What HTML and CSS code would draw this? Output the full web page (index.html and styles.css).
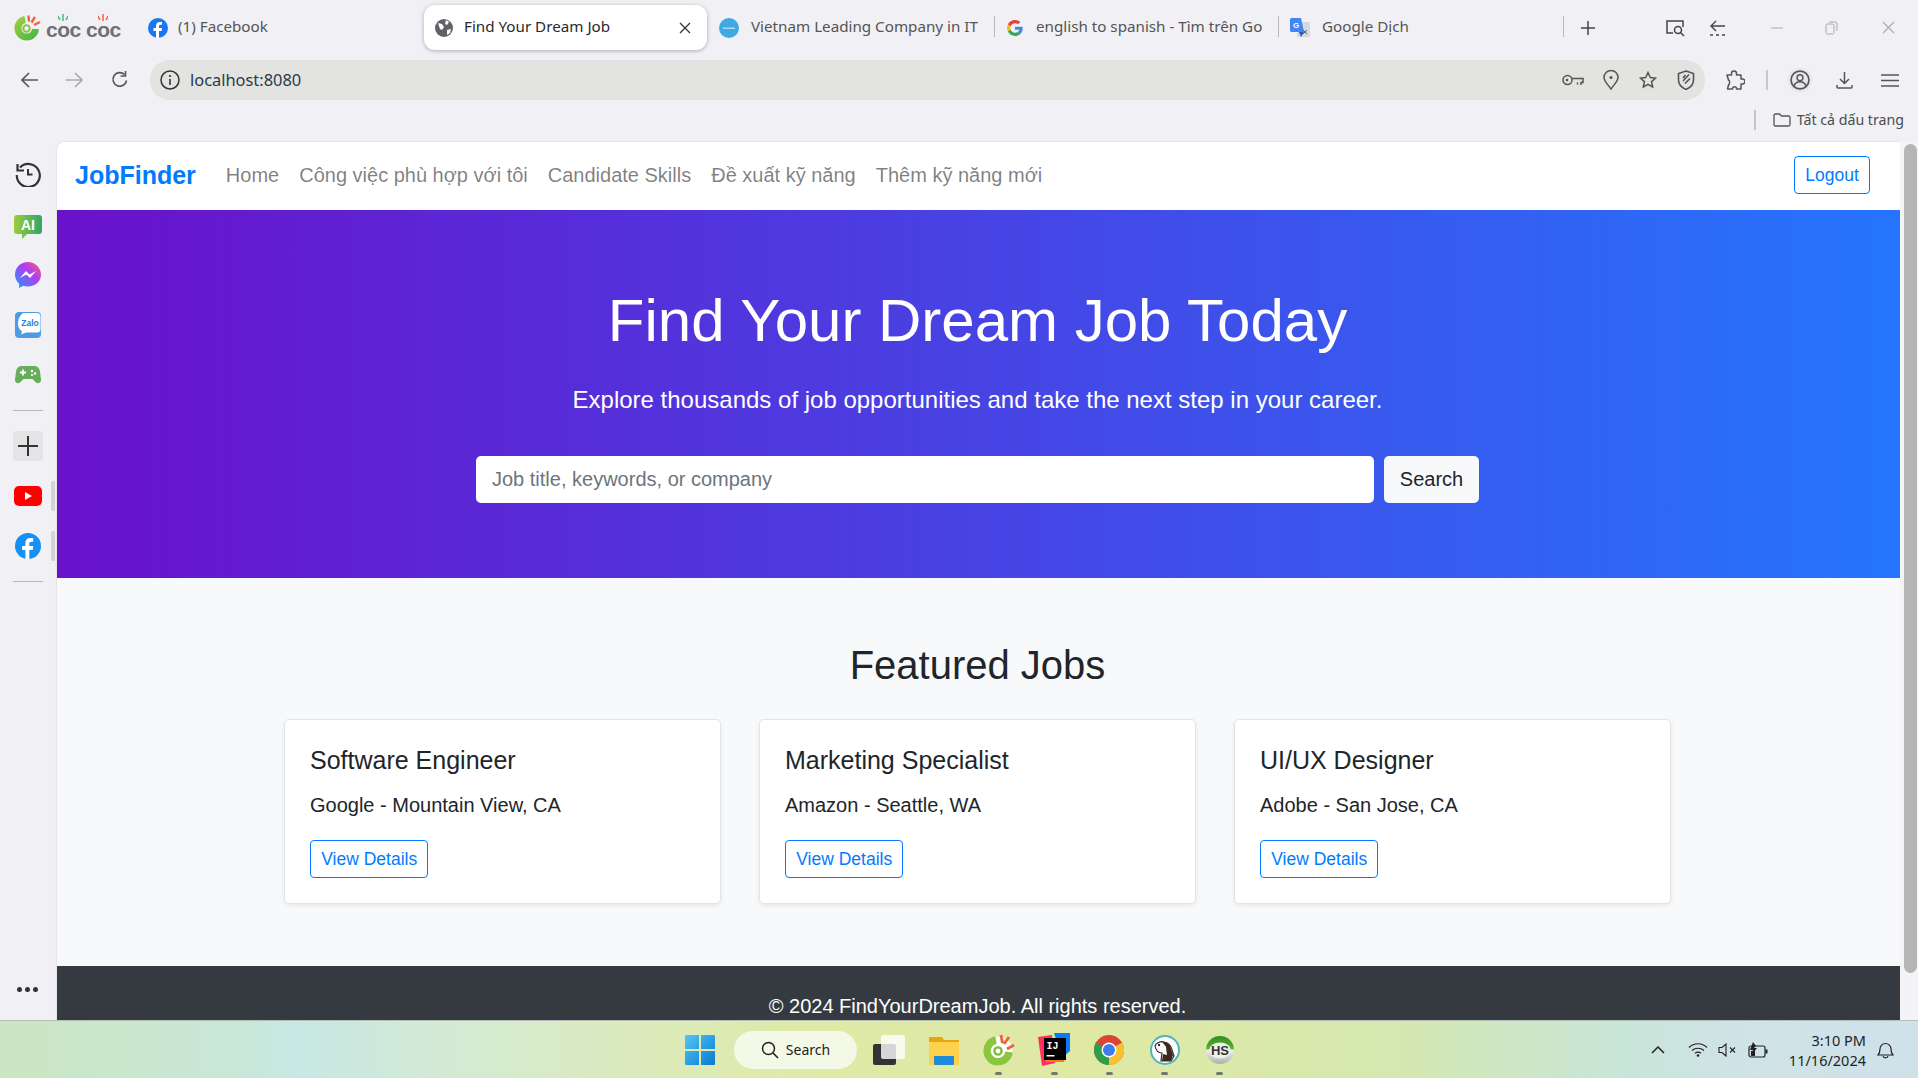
FILE: index.html
```html
<!DOCTYPE html>
<html lang="en">
<head>
<meta charset="utf-8">
<title>Find Your Dream Job</title>
<link rel="stylesheet" href="styles.css">
</head>
<body>
<div class="screen">
  <header class="chrome">
    <div class="tabs">
      <div class="brand-logo">
        <svg width="27" height="27" viewBox="0 0 27 27"><defs><linearGradient id="cc" x1="0" y1="0" x2="1" y2="1"><stop offset="0" stop-color="#9ccb3b"/><stop offset="1" stop-color="#4cb848"/></linearGradient></defs><path d="M11 5.500A8.800 8.800 0 1 0 21.500 15" fill="none" stroke="url(#cc)" stroke-width="7"/><circle cx="12.500" cy="14.500" r="3.200" fill="none" stroke="#8cc63f" stroke-width="2"/><path d="M14.500 1.500l.5 6M21 3l-3.500 5.500M26 8l-6 3" stroke="#f0643c" stroke-width="2.400"/></svg>
        <span class="logo-text"><span class="logo-word">coc<svg class="logo-spark" width="10" height="8" viewBox="0 0 10 8"><path d="M5 8V1M2 7L0 3M8 7l2-4" stroke="#4cb87a" stroke-width="1.500"/></svg></span> <span class="logo-word">coc<svg class="logo-spark" width="10" height="8" viewBox="0 0 10 8"><path d="M5 8V1M2 7L0 3M8 7l2-4" stroke="#f0643c" stroke-width="1.500"/></svg></span></span>
      </div>
      <div class="tab tab-fb">
        <svg width="20" height="20" viewBox="0 0 20 20"><circle cx="10" cy="10" r="10" fill="#1877f2"/><path d="M11 20v-7h2.600l.4-3h-3V8.200c0-.9.4-1.500 1.600-1.500H14V4.100c-.5-.1-1.300-.2-2.200-.2-2.300 0-3.800 1.400-3.800 3.800V10H5.500v3H8v7z" fill="#fff"/></svg>
        <span class="tab-label">(1) Facebook</span>
      </div>
      <div class="tab tab-active">
        <svg width="18" height="18" viewBox="0 0 18 18"><circle cx="9" cy="9" r="9" fill="#5f6368"/><path d="M3 4l4 1 2 3-2 3-2-1zM11 1l3 2-2 3-2-1zM12 11l4-1-1 4-3 2z" fill="#fff"/></svg>
        <span class="tab-label tab-label-dark">Find Your Dream Job</span>
        <svg class="tab-close" width="12" height="12" viewBox="0 0 12 12"><path d="M1 1l10 10M11 1L1 11" stroke="#333" stroke-width="1.300"/></svg>
      </div>
      <div class="tab tab-vn tab-sep">
        <svg width="20" height="20" viewBox="0 0 20 20"><circle cx="10" cy="10" r="10" fill="#3fa9e6"/><path d="M4 9.500h12v1.500H4z" fill="#a9d8f3"/></svg>
        <span class="tab-label">Vietnam Leading Company in IT</span>
      </div>
      <div class="tab tab-en tab-sep">
        <svg width="16" height="16" viewBox="0 0 48 48"><path fill="#ea4335" d="M24 9.500c3.500 0 6.700 1.200 9.200 3.600l6.900-6.900C35.900 2.400 30.500 0 24 0 14.600 0 6.500 5.400 2.600 13.200l8 6.200C12.500 13.700 17.800 9.500 24 9.500z"/><path fill="#4285f4" d="M47 24.500c0-1.600-.1-3.100-.4-4.500H24v9h12.900c-.6 3-2.200 5.500-4.800 7.200l7.700 6C44.400 37.900 47 31.800 47 24.500z"/><path fill="#fbbc05" d="M10.600 28.600c-.5-1.400-.8-3-.8-4.600s.3-3.200.8-4.600l-8-6.200C.9 16.500 0 20.100 0 24s.9 7.500 2.600 10.800z"/><path fill="#34a853" d="M24 48c6.500 0 11.900-2.100 15.900-5.800l-7.700-6c-2.200 1.500-4.900 2.300-8.200 2.300-6.200 0-11.500-4.200-13.400-9.900l-8 6.200C6.500 42.600 14.600 48 24 48z"/></svg>
        <span class="tab-label">english to spanish - Tìm trên Go</span>
      </div>
      <div class="tab tab-gt tab-sep">
        <svg width="20" height="20" viewBox="0 0 20 20"><rect x="7" y="4" width="13" height="15" rx="1" fill="#d5d8dc"/><path d="M0 1.500A1.500 1.500 0 0 1 1.500 0H11l3 14H1.500A1.500 1.500 0 0 1 0 12.500z" fill="#4285f4"/><path d="M9 14l2 5 3-5z" fill="#2a56c6"/><text x="3" y="10" class="gt-g">G</text><path d="M13 12l4 4M17 12l-4 4" stroke="#5f6368"/></svg>
        <span class="tab-label">Google Dịch</span>
      </div>
      <svg class="new-tab" width="14" height="14" viewBox="0 0 14 14"><path d="M7 0v14M0 7h14" stroke="#444" stroke-width="1.500"/></svg>
      <svg class="tab-tool-a" width="20" height="18" viewBox="0 0 20 18"><path d="M8 14H2V2h16v6" fill="none" stroke="#444" stroke-width="1.500"/><circle cx="13" cy="11" r="3.500" fill="none" stroke="#444" stroke-width="1.500"/><path d="M15.500 13.500L19 17" stroke="#444" stroke-width="1.500"/></svg>
      <svg class="tab-tool-b" width="18" height="18" viewBox="0 0 18 18"><path d="M7 2L2 7l5 5M2 7h14" fill="none" stroke="#444" stroke-width="1.400"/><path d="M1 16h3M7 16h3M13 16h3" stroke="#444" stroke-width="1.500"/></svg>
      <svg class="win-min" width="12" height="2" viewBox="0 0 12 2"><path d="M0 1h12" stroke="#aaa"/></svg>
      <svg class="win-max" width="13" height="14" viewBox="0 0 13 14"><rect x="1" y="3" width="8" height="10" rx="1.500" fill="none" stroke="#aaa"/><path d="M4 1h6a2 2 0 0 1 2 2v7" fill="none" stroke="#aaa"/></svg>
      <svg class="win-close" width="13" height="13" viewBox="0 0 13 13"><path d="M1 1l11 11M12 1L1 12" stroke="#aaa" stroke-width="1.100"/></svg>
    </div>
    <div class="toolbar">
      <svg class="nav-back" width="18" height="16" viewBox="0 0 18 16"><path d="M8 1L1 8l7 7M1 8h16" fill="none" stroke="#555" stroke-width="1.600"/></svg>
      <svg class="nav-fwd" width="18" height="16" viewBox="0 0 18 16"><path d="M10 1l7 7-7 7M17 8H1" fill="none" stroke="#aaa" stroke-width="1.600"/></svg>
      <svg class="nav-reload" width="18" height="18" viewBox="0 0 18 18"><path d="M15.500 9.500a6.800 6.800 0 1 1-2-6" fill="none" stroke="#555" stroke-width="1.600"/><path d="M14.500 0v5h-5" fill="none" stroke="#555" stroke-width="1.600"/></svg>
      <div class="addr">
        <svg width="20" height="20" viewBox="0 0 20 20"><circle cx="10" cy="10" r="9" fill="none" stroke="#333" stroke-width="1.500"/><path d="M10 9v6" stroke="#333" stroke-width="1.600"/><circle cx="10" cy="6" r="1.100" fill="#333"/></svg>
        <span class="addr-text">localhost:8080</span>
        <span class="addr-icons">
          <svg class="addr-key" width="22" height="13" viewBox="0 0 22 13"><circle cx="5.500" cy="6" r="4.500" fill="none" stroke="#555" stroke-width="1.500"/><circle cx="5" cy="6" r="1.300" fill="#555"/><path d="M10 4.500h11v4h-2v2.500M15.500 8.500v2" fill="none" stroke="#555" stroke-width="1.500"/></svg>
          <svg width="16" height="20" viewBox="0 0 16 20"><path d="M8 19C4 13.500 1 11 1 7.500a7 7 0 0 1 14 0C15 11 12 13.500 8 19z" fill="none" stroke="#555" stroke-width="1.500"/><circle cx="8" cy="7.500" r="1.600" fill="#555"/></svg>
          <svg width="18" height="18" viewBox="0 0 18 18"><path d="M9 1.500l2.300 5 5.200.6-3.900 3.500 1.100 5.400L9 13.300 4.300 16l1.100-5.400L1.500 7.100l5.200-.6z" fill="none" stroke="#555" stroke-width="1.500"/></svg>
          <svg width="18" height="20" viewBox="0 0 18 20"><path d="M9 1l7.500 2.500V10c0 4.500-3 7.500-7.500 9.500C4.500 17.500 1.500 14.500 1.500 10V3.500z" fill="none" stroke="#555" stroke-width="1.600"/><path d="M6 11l6-6.500M8 13.500l5-5M6 8l2.500-3" fill="none" stroke="#555" stroke-width="1.600"/></svg>
        </span>
      </div>
      <svg class="tool-puzzle" width="20" height="20" viewBox="0 0 20 20"><path d="M2 5h4.500V3.500a2.500 2.500 0 0 1 5 0V5H16v4h1.500a2.500 2.500 0 0 1 0 5H16v5h-4.500c.3-3-4-3-4 0H2.500l1-4c1.500-.5 1.500-4.500 0-5z" fill="none" stroke="#555" stroke-width="1.500" stroke-linejoin="round"/></svg>
      <span class="tool-sep"></span>
      <span class="tool-profile">
        <svg width="20" height="20" viewBox="0 0 22 22"><circle cx="11" cy="11" r="9.800" fill="none" stroke="#555" stroke-width="1.800"/><circle cx="11" cy="8.500" r="3.200" fill="none" stroke="#555" stroke-width="1.600"/><path d="M4.500 17.500c1-3 3.500-4.500 6.500-4.500s5.500 1.500 6.500 4.500" fill="none" stroke="#555" stroke-width="1.600"/></svg>
      </span>
      <svg class="tool-dl" width="17" height="17" viewBox="0 0 17 17"><path d="M8.500 0v11M4 7l4.500 4.500L13 7M1 13v2a1 1 0 0 0 1 1h13a1 1 0 0 0 1-1v-2" fill="none" stroke="#555" stroke-width="1.500"/></svg>
      <svg class="tool-menu" width="18" height="13" viewBox="0 0 18 13"><path d="M0 1h18M0 6.500h18M0 12h18" stroke="#555" stroke-width="1.600"/></svg>
    </div>
    <div class="bookmarks">
      <span class="bm-sep"></span>
      <svg width="18" height="14" viewBox="0 0 18 14"><path d="M1 2.500A1.500 1.500 0 0 1 2.500 1h4l2 2H15.500A1.500 1.500 0 0 1 17 4.500v7a1.500 1.500 0 0 1-1.500 1.500h-13A1.500 1.500 0 0 1 1 11.500z" fill="none" stroke="#555" stroke-width="1.300"/></svg>
      <span class="bm-text">Tất cả dấu trang</span>
    </div>
  </header>

  <div class="workspace">
    <aside class="sidebar">
      <div class="side-slot side-first">
        <svg width="26" height="26" viewBox="0 0 26 26"><path d="M5 6.500A11.500 11.500 0 1 1 1.800 14" fill="none" stroke="#333" stroke-width="2.200"/><path d="M2.500 3v6.500H9" fill="none" stroke="#333" stroke-width="2.200"/><path d="M13 8v5.500h4.500" fill="none" stroke="#333" stroke-width="2"/></svg>
      </div>
      <div class="side-slot side-ai">
        <svg width="28" height="24" viewBox="0 0 28 24"><defs><linearGradient id="ai" x1="0" x2="1" y1="0" y2="0"><stop offset="0" stop-color="#9ccc3c"/><stop offset="1" stop-color="#2ea56a"/></linearGradient></defs><path d="M3 0h22a3 3 0 0 1 3 3v13a3 3 0 0 1-3 3H13l-5 5v-5H3a3 3 0 0 1-3-3V3a3 3 0 0 1 3-3z" fill="url(#ai)"/><text x="14" y="15" class="ico-ai">AI</text></svg>
      </div>
      <div class="side-slot">
        <svg width="26" height="26" viewBox="0 0 26 26"><defs><linearGradient id="ms" x1="1" y1="0" x2="0" y2="1"><stop offset="0" stop-color="#ff5f6d"/><stop offset=".4" stop-color="#b33bf0"/><stop offset="1" stop-color="#1e9bff"/></linearGradient></defs><path d="M13 0C5.700 0 0 5.400 0 12.500c0 3.800 1.600 7 4.100 9.200V26l4-2.200c1.500.4 3.100.7 4.900.7 7.300 0 13-5.400 13-12S20.300 0 13 0z" fill="url(#ms)"/><path d="M5 16l6-7 3.500 3.500L21 9l-6 7-3.500-3.500z" fill="#fff"/></svg>
      </div>
      <div class="side-slot">
        <svg width="26" height="26" viewBox="0 0 26 26"><rect width="26" height="26" rx="4" fill="#4d9be3"/><path d="M8 1h14a3.500 3.500 0 0 1 3.500 3.500V17a3.500 3.500 0 0 1-3.500 3.500H11l-5 2 1-3c-3-2-4-5-4-8 0-5 2-8 5-10.500z" fill="#fff"/><text x="15" y="14" class="ico-zalo">Zalo</text></svg>
      </div>
      <div class="side-slot">
        <svg width="26" height="18" viewBox="0 0 26 18"><path d="M7 0h12c3.500 0 5.500 2 6 5.500l1 8c.3 3-2.500 5-5 3L17.500 13h-9L5 16.500c-2.500 2-5.300 0-5-3l1-8C1.500 2 3.500 0 7 0z" fill="#66ae5c"/><path d="M5 6.500h6M8 3.500v6" stroke="#fff" stroke-width="1.800"/><circle cx="17" cy="5" r="1.300" fill="#fff"/><circle cx="20" cy="7.500" r="1.300" fill="#fff"/><circle cx="17" cy="9" r="1.100" fill="#fff"/></svg>
      </div>
      <hr class="side-rule side-rule-a">
      <div class="side-add">
        <svg width="20" height="20" viewBox="0 0 20 20"><path d="M10 0v20M0 10h20" stroke="#333" stroke-width="2"/></svg>
      </div>
      <div class="side-slot side-handle">
        <svg width="28" height="20" viewBox="0 0 28 20"><rect width="28" height="20" rx="5" fill="#f00"/><path d="M11 6l7 4-7 4z" fill="#fff"/></svg>
      </div>
      <div class="side-slot side-handle">
        <svg width="26" height="26" viewBox="0 0 20 20"><circle cx="10" cy="10" r="10" fill="#1690f5"/><path d="M11 20v-7h2.600l.4-3h-3V8.200c0-.9.4-1.500 1.600-1.500H14V4.100c-.5-.1-1.300-.2-2.200-.2-2.300 0-3.800 1.400-3.800 3.800V10H5.500v3H8v7z" fill="#fff"/></svg>
      </div>
      <hr class="side-rule side-rule-b">
      <div class="side-more"><i></i><i></i><i></i></div>
    </aside>

    <main class="page">
      <nav class="navbar">
        <a class="nav-brand">JobFinder</a>
        <a class="nav-link">Home</a>
        <a class="nav-link">Công việc phù hợp với tôi</a>
        <a class="nav-link">Candidate Skills</a>
        <a class="nav-link">Đề xuất kỹ năng</a>
        <a class="nav-link">Thêm kỹ năng mới</a>
        <a class="btn-outline nav-logout">Logout</a>
      </nav>
      <section class="hero">
        <h1 class="hero-title">Find Your Dream Job Today</h1>
        <p class="hero-lead">Explore thousands of job opportunities and take the next step in your career.</p>
        <form class="hero-form">
          <input class="hero-input" type="text" placeholder="Job title, keywords, or company">
          <button class="hero-btn" type="button">Search</button>
        </form>
      </section>
      <section class="featured">
        <h2 class="featured-title">Featured Jobs</h2>
        <div class="card-row">
          <article class="card">
            <h5 class="card-title">Software Engineer</h5>
            <p class="card-text">Google - Mountain View, CA</p>
            <a class="btn-outline">View Details</a>
          </article>
          <article class="card">
            <h5 class="card-title">Marketing Specialist</h5>
            <p class="card-text">Amazon - Seattle, WA</p>
            <a class="btn-outline">View Details</a>
          </article>
          <article class="card">
            <h5 class="card-title">UI/UX Designer</h5>
            <p class="card-text">Adobe - San Jose, CA</p>
            <a class="btn-outline">View Details</a>
          </article>
        </div>
      </section>
      <footer class="site-footer">© 2024 FindYourDreamJob. All rights reserved.</footer>
    </main>

    <div class="scrollbar"><div class="scroll-thumb"></div></div>
  </div>

  <div class="taskbar">
    <svg class="tb-win" width="30" height="30" viewBox="0 0 30 30"><defs><linearGradient id="wn" x1="0" y1="0" x2="1" y2="1"><stop offset="0" stop-color="#52c7f5"/><stop offset="1" stop-color="#0a78d4"/></linearGradient></defs><rect width="30" height="30" fill="url(#wn)" rx="1"/><path d="M14.500 0v30M15.500 0v30M0 14.500h30M0 15.500h30" stroke="#e0e9a8"/></svg>
    <div class="tb-search">
      <svg width="18" height="18" viewBox="0 0 18 18"><circle cx="7.500" cy="7.500" r="6" fill="none" stroke="#222" stroke-width="1.500"/><path d="M12 12l5 5" stroke="#222" stroke-width="1.600"/></svg>
      <span>Search</span>
    </div>
    <div class="tb-apps">
      <div class="tb-app">
        <svg width="32" height="30" viewBox="0 0 32 30"><rect x="0" y="9" width="23" height="21" rx="2" fill="#333"/><rect x="8" y="0" width="24" height="24" rx="2" fill="#fff" opacity=".8"/></svg>
      </div>
      <div class="tb-app">
        <svg width="30" height="30" viewBox="0 0 30 30"><path d="M0 2h13l2 3h15v25H0z" fill="#e5a812"/><rect y="7" width="30" height="23" fill="#ffd24d"/><rect x="5" y="21" width="20" height="9" rx="1" fill="#1f8ad8"/></svg>
      </div>
      <div class="tb-app tb-run">
        <svg width="32" height="32" viewBox="0 0 32 32"><circle cx="15" cy="17" r="14.500" fill="#fff"/><path d="M13 6A11 11 0 1 0 26 18" fill="none" stroke="#8cc63f" stroke-width="7.500"/><circle cx="15" cy="17" r="3.600" fill="none" stroke="#7cbf3f" stroke-width="2.400"/><path d="M18 1l1.500 8M26 3l-5 7M31 11l-7 4" stroke="#f0643c" stroke-width="3"/></svg>
      </div>
      <div class="tb-app tb-run">
        <svg width="32" height="33" viewBox="0 0 32 33"><path d="M0 4l14-2 3 28-13 3z" fill="#fe315d"/><path d="M16 0h16v18l-8 7z" fill="#087cfa"/><path d="M6 22h22l-2 7H8z" fill="#f97a12"/><rect x="6" y="5" width="22" height="22" fill="#000"/><text x="8.500" y="16" class="ico-ij">IJ</text><rect x="8.500" y="22" width="8" height="1.500" fill="#fff"/></svg>
      </div>
      <div class="tb-app tb-run">
        <svg width="30" height="30" viewBox="0 0 30 30"><circle cx="15" cy="15" r="15" fill="#db4437"/><path d="M15 15L28 7.500A15 15 0 0 1 15 30z" fill="#fbc02d"/><path d="M15 15V30A15 15 0 0 1 2 7.500z" fill="#2e9e4a"/><circle cx="15" cy="15" r="7.500" fill="#fff"/><circle cx="15" cy="15" r="6" fill="#3b7ded"/></svg>
      </div>
      <div class="tb-app tb-run">
        <svg width="30" height="30" viewBox="0 0 30 30"><circle cx="15" cy="15" r="14" fill="#fff" stroke="#4fb3bf" stroke-width="2"/><path d="M5 11c1-3 5-5 9-4 5 1 7 3 8 8l2 6-3 5H11l1-8c-3 0-6-2-7-7z" fill="#fff" stroke="#3a2a20" stroke-width="1.200"/><path d="M12 7c3-1 7 1 8 4l3 9-2 6h-9l1-7 4 1-1-8c-1-2-3-4-4-5z" fill="#3a2a20"/><circle cx="9" cy="10" r="1.200" fill="#3a2a20"/></svg>
      </div>
      <div class="tb-app tb-run">
        <svg width="28" height="30" viewBox="0 0 28 30"><defs><linearGradient id="hs" x1="0" x2="0" y1="0" y2="1"><stop offset="0" stop-color="#2f8f1f"/><stop offset=".45" stop-color="#5fae2f"/><stop offset=".5" stop-color="#eee"/><stop offset="1" stop-color="#b0b0a8"/></linearGradient></defs><circle cx="14" cy="15" r="14" fill="url(#hs)"/><ellipse cx="14" cy="15.500" rx="11" ry="8" fill="#eef0ea"/><text x="14" y="20" class="ico-hs">HS</text></svg>
      </div>
    </div>
    <div class="tray">
      <svg class="tray-chev" width="14" height="8" viewBox="0 0 14 8"><path d="M1 7l6-6 6 6" fill="none" stroke="#222" stroke-width="1.500"/></svg>
      <svg class="tray-wifi" width="20" height="15" viewBox="0 0 20 15"><path d="M1 5.500c5-5 13-5 18 0M4 8.500c3.500-3 8.500-3 12 0M7 11.200c2-1.500 4-1.500 6 0" fill="none" stroke="#222" stroke-width="1.200"/><circle cx="10" cy="13.500" r="1.300" fill="#222"/></svg>
      <svg class="tray-vol" width="19" height="14" viewBox="0 0 19 14"><path d="M1 4.500h3L8 1v12L4 9.500H1z" fill="none" stroke="#222" stroke-width="1.100"/><path d="M12 4.500l5 5M17 4.500l-5 5" stroke="#222" stroke-width="1.100"/></svg>
      <svg class="tray-bat" width="20" height="16" viewBox="0 0 20 16"><rect x="1" y="4" width="16" height="11" rx="2" fill="none" stroke="#222" stroke-width="1.200"/><rect x="17.500" y="7.500" width="2" height="4" fill="#222"/><path d="M5 0L2 8h3l-2 6 6-8H6l2-2V4z" fill="#222"/><path d="M3 9h4v5H3z" fill="#222"/></svg>
      <div class="tray-clock"><span>3:10 PM</span><span>11/16/2024</span></div>
      <svg class="tray-bell" width="17" height="18" viewBox="0 0 17 18"><path d="M1 14c1.500-1.500 2-3 2-6a5.500 5.500 0 0 1 11 0c0 3 .5 4.500 2 6z" fill="none" stroke="#222" stroke-width="1.200"/><path d="M6 15c.5 2.500 4.500 2.500 5 0" fill="none" stroke="#222" stroke-width="1.200"/></svg>
    </div>
  </div>
</div>
</body>
</html>
```
FILE: styles.css
```css
* { box-sizing: border-box; }
html, body { margin: 0; padding: 0; height: 100%; overflow: hidden; }
body { font-family: "Liberation Sans", Arial, sans-serif; font-size: 20px; color: #212529; background: #f0f0f5; }
.screen { width: 1918px; height: 1078px; display: flex; flex-direction: column; overflow: hidden; }

/* browser chrome */
.chrome { height: 142px; flex: none; background: #f0f0f5; font-family: "Noto Sans", sans-serif; }
.tabs { height: 54px; display: flex; align-items: center; padding-top: 1px; }
.brand-logo { width: 136px; flex: none; display: flex; align-items: center; padding-left: 14px; gap: 5px; }
.logo-text { font-family: "Liberation Sans", sans-serif; font-size: 21px; font-weight: 700; color: #707175; letter-spacing: -0.5px; white-space: nowrap; margin-top: 5px; }
.logo-word { position: relative; }
.logo-spark { position: absolute; left: 12px; top: -5px; }
.tab { height: 45px; flex: none; display: flex; align-items: center; gap: 12px; padding-left: 12px; overflow: hidden; }
.tab-label { font-size: 15.2px; color: #555; white-space: nowrap; margin-top: -3px; }
.tab-label-dark { color: #2a2a2a; }
.tab-fb { width: 288px; gap: 10px; }
.tab-active { width: 283px; background: #fff; border-radius: 11px; box-shadow: 0 1px 4px rgba(0,0,0,.28); padding-left: 11px; gap: 11px; }
.tab-close { margin-left: auto; margin-right: 16px; }
.tab-vn { width: 288px; }
.tab-en { width: 284px; padding-left: 12px; gap: 13px; }
.tab-gt { width: 285px; padding-left: 11px; }
.tab-sep { position: relative; }
.tab-sep::after { content: ""; position: absolute; right: 0; top: 11px; width: 1px; height: 21px; background: #b9b9bd; }
.new-tab { margin-left: 17px; flex: none; }
.tab-tool-a { margin-left: 70px; flex: none; }
.tab-tool-b { margin-left: 24px; flex: none; }
.win-min { margin-left: 44px; flex: none; }
.win-max { margin-left: 42px; flex: none; }
.win-close { margin-left: 44px; flex: none; }

.toolbar { height: 52px; display: flex; align-items: center; padding: 0 0 0 21px; }
.nav-fwd { margin-left: 26px; flex: none; }
.nav-reload { margin-left: 28px; flex: none; }
.addr { width: 1555px; height: 40px; margin-left: 21px; flex: none; border-radius: 20px; background: #e3e3e2; display: flex; align-items: center; padding-left: 10px; gap: 10px; }
.addr-text { font-size: 16.4px; color: #2a3a4a; margin-top: -2px; }
.addr-icons { margin-left: auto; margin-right: 10px; display: flex; align-items: center; gap: 20px; }
.addr-key { margin-right: -1px; }
.tool-puzzle { margin-left: 20px; flex: none; }
.tool-sep { width: 2px; height: 20px; background: #c8c8cc; margin-left: 21px; flex: none; }
.tool-profile { width: 24px; height: 24px; margin-left: 20px; flex: none; border-radius: 50%; background: #e6e6ea; display: flex; align-items: center; justify-content: center; }
.tool-dl { margin-left: 24px; flex: none; }
.tool-menu { margin-left: 28px; flex: none; }

.bookmarks { height: 36px; display: flex; align-items: center; padding: 0 14px 8px 0; justify-content: flex-end; gap: 6px; }
.bm-sep { width: 2px; height: 20px; background: #c4c4c8; margin-right: 11px; }
.bm-text { font-size: 14.2px; color: #4c4c52; white-space: nowrap; margin-top: -2px; }

/* workspace */
.workspace { flex: 1; min-height: 0; display: flex; }
.sidebar { width: 57px; flex: none; display: flex; flex-direction: column; align-items: center; padding: 8px 2px 0 0; }
.side-slot { height: 50px; width: 100%; flex: none; display: flex; align-items: center; justify-content: center; }
.side-first { padding-bottom: 2px; }
.side-ai { padding-top: 4px; }
.side-handle { position: relative; }
.side-handle::after { content: ""; position: absolute; left: 51px; top: 10px; width: 4px; height: 30px; border-radius: 2px 0 0 2px; background: #d3d3d5; }
.side-rule { width: 30px; height: 0; margin: 0; border: 0; border-top: 1px solid #b9b9bb; flex: none; }
.side-rule-a { margin-top: 10px; }
.side-rule-b { margin-top: 10px; }
.side-add { width: 30px; height: 30px; margin: 20px 0 10px; flex: none; border-radius: 4px; background: #e4e4e6; display: flex; align-items: center; justify-content: center; }
.side-more { margin-top: auto; margin-bottom: 28px; display: flex; gap: 3px; }
.side-more i { width: 5px; height: 5px; border-radius: 50%; background: #333; display: block; }

.page { flex: 1; min-width: 0; overflow: hidden; background: #f8f9fa; border-top-left-radius: 8px; box-shadow: 0 0 2px rgba(0,0,0,.18); }
.scrollbar { width: 18px; flex: none; background: #f4f4f6; padding: 2px 1px 0 4px; }
.scroll-thumb { height: 829px; border-radius: 7px; background: #b5b5b5; }

/* navbar */
.navbar { height: 68px; background: #fff; display: flex; align-items: center; padding: 0 30px 2px 18px; }
.nav-brand { font-size: 25px; font-weight: 700; color: #007bff; margin-right: 20px; }
.nav-link { font-size: 20px; color: rgba(0,0,0,.5); padding: 0 10px; white-space: nowrap; }
.btn-outline { display: inline-block; font-size: 17.5px; line-height: 26.250px; color: #007bff; border: 1px solid #007bff; border-radius: 4px; padding: 5px 10.250px; }
.nav-logout { margin-left: auto; }

/* hero */
.hero { height: 368px; background: linear-gradient(to right, #6a11cb, #2575fc); color: #fff; text-align: center; padding: 69px 2px 0 0; }
.hero-title { margin: 0 0 19px; font-size: 60px; line-height: 84px; font-weight: 400; }
.hero-lead { margin: 0 0 38px; font-size: 24px; line-height: 36px; }
.hero-form { display: flex; width: 1003px; margin: 0 auto; gap: 10px; }
.hero-input { flex: 1; height: 47px; border: 0; border-radius: 5px; background: #fff; padding: 0 16px; font-family: "Liberation Sans", sans-serif; font-size: 20px; color: #495057; }
.hero-input::placeholder { color: #6c757d; opacity: 1; }
.hero-btn { width: 95px; height: 47px; border: 0; border-radius: 5px; background: #f8f9fa; font-family: "Liberation Sans", sans-serif; font-size: 20px; color: #212529; }

/* featured */
.featured { height: 388px; padding: 63px 2px 0 0; }
.featured-title { margin: 0 0 30px; font-size: 40px; line-height: 48px; font-weight: 400; text-align: center; }
.card-row { display: flex; gap: 38px; width: 1387px; margin: 0 auto; }
.card { width: 437px; height: 185px; flex: none; background: #fff; border: 1px solid #e3e4e6; border-radius: 5px; box-shadow: 0 2px 5px rgba(0,0,0,.07); padding: 25px; }
.card-title { margin: 0 0 15px; font-size: 25px; line-height: 30px; font-weight: 400; }
.card-text { margin: 0 0 20px; font-size: 20px; line-height: 30px; }

/* footer */
.site-footer { height: 54px; background: #343a40; color: #fff; text-align: center; font-size: 20px; line-height: 30px; padding: 25px 2px 0 0; overflow: hidden; }

/* taskbar */
.taskbar { height: 58px; flex: none; border-top: 1px solid #b4bdb6; background: linear-gradient(90deg, #cbe6c2 0, #c9e7d8 240px, #c8e8e4 300px, #d6ead0 480px, #dfeaa8 800px, #dfe9a4 1100px, #d4e8b0 1400px, #c8e5d8 1620px, #cfe3e8 1750px, #cfe1e9 1918px); display: flex; align-items: center; padding-left: 685px; font-family: "Noto Sans", sans-serif; }
.tb-win { flex: none; }
.tb-search { width: 123px; height: 38px; margin-left: 19px; flex: none; border-radius: 19px; background: #f4f8e6; display: flex; align-items: center; justify-content: center; gap: 7px; font-size: 14px; color: #222; }
.tb-apps { display: flex; margin-left: 4px; }
.tb-app { width: 55.200px; height: 57px; position: relative; display: flex; align-items: center; justify-content: center; }
.tb-run::after { content: ""; position: absolute; left: 24px; bottom: 3px; width: 7px; height: 3px; border-radius: 2px; background: #6f7a70; }
.tray { margin-left: auto; display: flex; align-items: center; padding-right: 24px; }
.tray-wifi { margin-left: 23px; }
.tray-vol { margin-left: 10px; }
.tray-bat { margin-left: 11px; }
.tray-clock { margin-left: 21px; display: flex; flex-direction: column; align-items: flex-end; font-size: 14.5px; line-height: 20px; color: #222; }
.tray-bell { margin-left: 11px; }

/* svg text */
.gt-g { font: 700 8px "Liberation Sans", sans-serif; fill: #fff; }
.ico-ai { font: 700 14px "Liberation Sans", sans-serif; fill: #fff; text-anchor: middle; }
.ico-zalo { font: 700 8.500px "Liberation Sans", sans-serif; fill: #2a7de1; text-anchor: middle; }
.ico-ij { font: 700 10px "Liberation Mono", monospace; fill: #fff; }
.ico-hs { font: 700 13px "Liberation Sans", sans-serif; fill: #333; text-anchor: middle; }
```
